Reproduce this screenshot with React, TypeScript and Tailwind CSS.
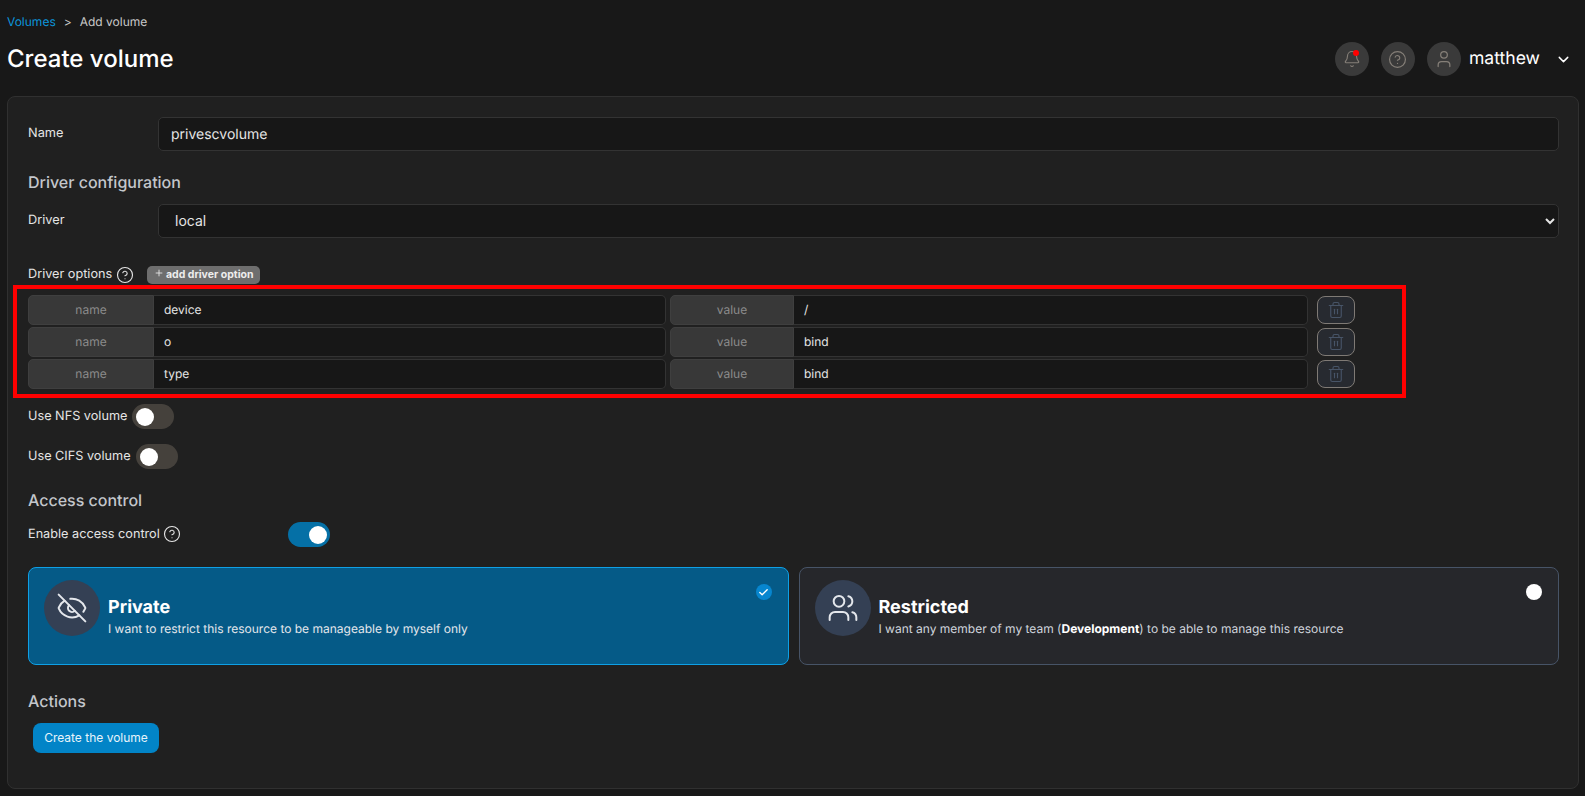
import { Bell, Check, ChevronDown, CircleHelp, EyeOff, Plus, Trash2, User, Users } from 'lucide-react'

const OPTIONS = [
  { name: 'device', value: '/' },
  { name: 'o', value: 'bind' },
  { name: 'type', value: 'bind' },
]

function Toggle({ on = false }: { on?: boolean }) {
  return (
    <div
      className={`flex h-[25px] w-[42px] shrink-0 items-center rounded-full ${
        on ? 'justify-end bg-[#0570a6] pr-[3px]' : 'justify-start bg-[#45413c] pl-[4px]'
      }`}
    >
      <div className="size-[18px] rounded-full bg-white" />
    </div>
  )
}

function TopCircle({ children }: { children: React.ReactNode }) {
  return (
    <div className="relative flex size-[34px] items-center justify-center rounded-full bg-[#3a3a3a] text-[#857f78]">
      {children}
    </div>
  )
}

function Heading({ children }: { children: React.ReactNode }) {
  return <h2 className="text-base leading-6 font-medium text-[#c4c7cc]">{children}</h2>
}

function AddonInput({ label, value, narrow }: { label: string; value: string; narrow?: boolean }) {
  return (
    <div className="flex h-[30px] flex-1">
      <div
        className={`flex items-center justify-center rounded-l-[5px] border border-[#3f3f3f] bg-[#383838] text-xs text-[#8b8b8b] ${
          narrow ? 'w-[124px]' : 'w-[126px]'
        }`}
      >
        {label}
      </div>
      <div className="flex flex-1 items-center rounded-r-[5px] border border-l-0 border-[#333333] bg-[#171717] pl-[10px] text-xs text-[#e5e5e5]">
        {value}
      </div>
    </div>
  )
}

function OptionRow({ name, value }: { name: string; value: string }) {
  return (
    <div className="flex h-[32px] items-center">
      <div className="flex w-[1280px] gap-[4px]">
        <AddonInput label="name" value={name} />
        <AddonInput label="value" value={value} narrow />
      </div>
      <button className="ml-[9px] flex h-[28px] w-[38px] items-center justify-center rounded-[8px] border border-[#7f7a75] bg-[#272a30] text-[#475467]">
        <Trash2 className="size-[18px]" strokeWidth={1.5} aria-hidden />
      </button>
    </div>
  )
}

export default function App() {
  return (
    <div className="h-[796px] overflow-hidden bg-[#181818] font-['Inter',sans-serif] text-[#e5e5e5] [text-rendering:geometricPrecision]">
      <header className="flex h-[96px] items-start justify-between px-[7px]">
        <div>
          <div className="flex h-[44px] items-center text-xs text-[#c9c9c9]">
            <span className="text-[#0c96dc]">Volumes</span>
            <span className="mx-[8px]">&gt;</span>
            <span>Add volume</span>
          </div>
          <h1 className="text-2xl leading-[30px] font-medium text-white">Create volume</h1>
        </div>
        <div className="mt-[42px] mr-[6px] flex items-center">
          <TopCircle>
            <Bell className="size-[18px]" strokeWidth={1.5} aria-hidden />
            <span className="absolute top-[8px] left-[18px] size-[6px] rounded-full bg-[#ff0000]" />
          </TopCircle>
          <div className="ml-[12px]">
            <TopCircle>
              <CircleHelp className="size-[19px]" strokeWidth={1.5} aria-hidden />
            </TopCircle>
          </div>
          <div className="ml-[12px]">
            <TopCircle>
              <User className="size-[20px]" strokeWidth={1.5} aria-hidden />
            </TopCircle>
          </div>
          <span className="ml-[8px] pt-[1px] text-[17.6px] font-normal text-white">matthew</span>
          <ChevronDown className="ml-[15px] size-[17px] text-white" strokeWidth={2} aria-hidden />
        </div>
      </header>

      <main className="ml-[7px] h-[693px] w-[1572px] rounded-[8px] border border-[#303030] bg-[#202020] pt-[20px] pr-[19px] pl-[20px]">
        <div className="flex h-[34px] items-center">
          <label className="w-[130px] pb-[1px] text-[12.8px]">Name</label>
          <div className="flex h-[34px] flex-1 items-center rounded-[5px] border border-[#333333] bg-[#171717] pt-[1px] pl-[12px] text-sm text-[#e5e5e5]">
            privescvolume
          </div>
        </div>

        <div className="mt-[19px]">
          <Heading>Driver configuration</Heading>
        </div>

        <div className="mt-[10px] flex h-[34px] items-center">
          <label className="w-[130px] text-[12.8px]">Driver</label>
          <select className="h-[34px] flex-1 rounded-[5px] border border-[#333333] bg-[#171717] pb-[2px] pl-[12px] text-sm text-[#e5e5e5]">
            <option>local</option>
          </select>
        </div>

        <div className="mt-[27px] flex h-[20px] items-center text-[12.7px]">
          <span>Driver options</span>
          <CircleHelp className="ml-[4px] size-[18px]" strokeWidth={1.5} aria-hidden />
          <button className="ml-[13px] flex h-[18px] w-[113px] items-center justify-center rounded-[5px] bg-[#6e6e6e] text-[10.5px] font-bold text-[#ededed]">
            <Plus className="mr-[2px] mb-[4px] size-[10px]" aria-hidden />
            add driver option
          </button>
        </div>

        <div className="relative mt-[9px]">
          <div className="pointer-events-none absolute -top-[9px] -left-[15px] h-[113px] w-[1393px] border-4 border-[#ff0000]" />
          {OPTIONS.map((o) => (
            <OptionRow key={o.name} name={o.name} value={o.value} />
          ))}
        </div>

        <div className="mt-[14px] flex items-center text-[12.7px]">
          <span className="mr-[5px]">Use NFS volume</span>
          <Toggle />
        </div>
        <div className="mt-[15px] flex items-center text-[12.7px]">
          <span className="mr-[5px]">Use CIFS volume</span>
          <Toggle />
        </div>

        <div className="mt-[19px]">
          <Heading>Access control</Heading>
        </div>
        <div className="mt-[10px] flex items-center text-[12.7px]">
          <div className="flex w-[260px] items-center">
            <span>Enable access control</span>
            <CircleHelp className="ml-[3px] size-[18px]" strokeWidth={1.5} aria-hidden />
          </div>
          <Toggle on />
        </div>

        <div className="mt-[20px] grid grid-cols-2 gap-[10px]">
          <div className="relative flex h-[98px] rounded-[8px] border border-[#0ea0e6] bg-[#055a87] px-[15px] pt-[12px]">
            <div className="flex size-[56px] shrink-0 items-center justify-center rounded-full bg-[#344054] text-[#e4e7ec]">
              <EyeOff className="size-[32px]" strokeWidth={1.5} aria-hidden />
            </div>
            <div className="ml-[8px] pt-[16px]">
              <div className="text-lg leading-[24px] font-bold text-white">Private</div>
              <div className="mt-[1px] text-xs text-[#e4e7ec]">I want to restrict this resource to be manageable by myself only</div>
            </div>
            <div className="absolute top-[16px] right-[16px] flex size-[16px] items-center justify-center rounded-full bg-[#0786cf] text-white">
              <Check className="size-[11px]" strokeWidth={3} aria-hidden />
            </div>
          </div>
          <div className="relative flex h-[98px] rounded-[8px] border border-[#475467] bg-[#26272b] px-[15px] pt-[12px]">
            <div className="flex size-[56px] shrink-0 items-center justify-center rounded-full bg-[#344054] text-[#e4e7ec]">
              <Users className="size-[32px]" strokeWidth={1.5} aria-hidden />
            </div>
            <div className="ml-[8px] pt-[16px]">
              <div className="text-lg leading-[24px] font-bold text-white">Restricted</div>
              <div className="mt-[1px] text-xs text-[#d0d5dd]">
                I want any member of my team (<b className="text-white">Development</b>) to be able to manage this resource
              </div>
            </div>
            <div className="absolute top-[16px] right-[16px] size-[16px] rounded-full bg-white" />
          </div>
        </div>

        <div className="mt-[24px]">
          <Heading>Actions</Heading>
        </div>
        <button className="mt-[10px] ml-[5px] flex h-[30px] w-[126px] items-center justify-center rounded-[8px] bg-[#0284c7] text-xs text-[#e8f4fb]">
          Create the volume
        </button>
      </main>
    </div>
  )
}
